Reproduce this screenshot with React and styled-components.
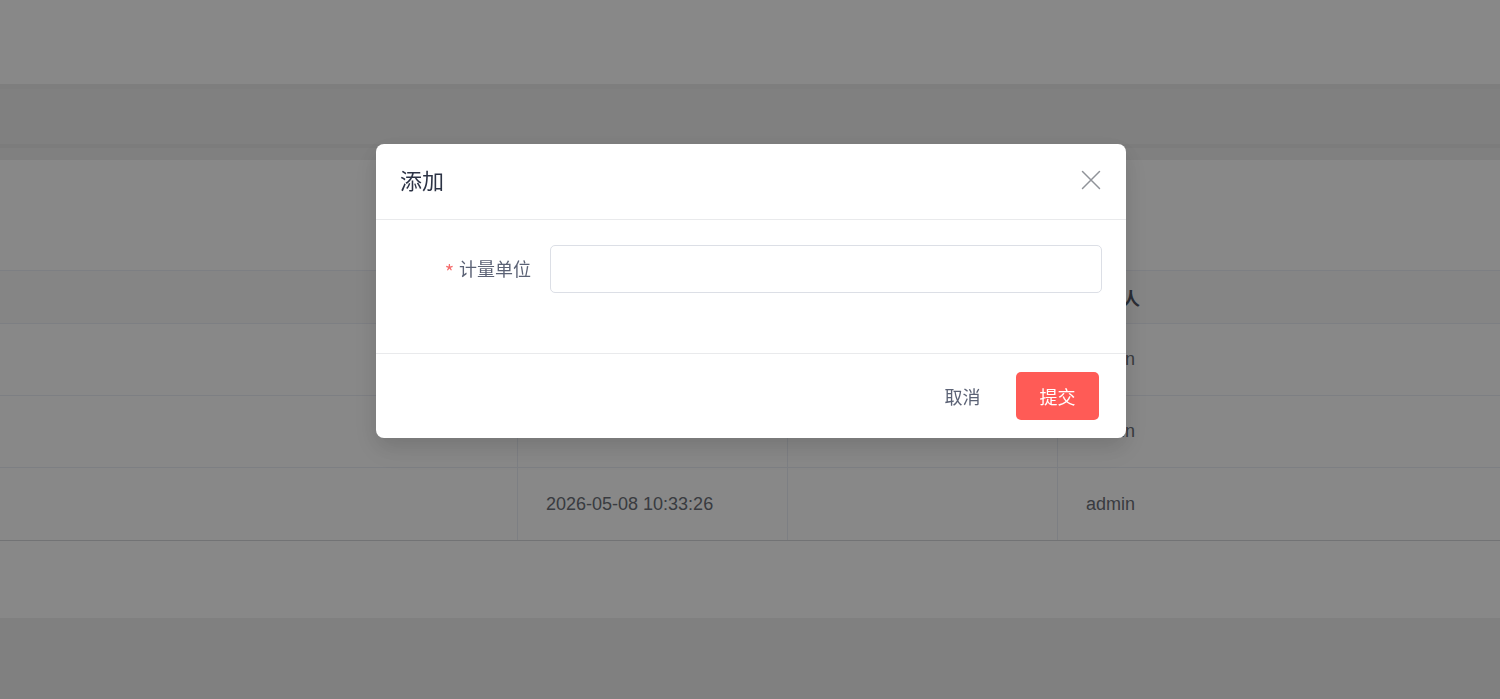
import React, { useState } from 'react'
import styled, { createGlobalStyle } from 'styled-components'

const GlobalStyle = createGlobalStyle`
  html, body {
    margin: 0;
    padding: 0;
    height: 100%;
    overflow: hidden;
    font-family: "Liberation Sans", "Noto Sans CJK SC", Arial, sans-serif;
    background: #f0f0f0;
  }
  * { box-sizing: border-box; }
`

const rows = [
  { time: '', remark: '', creator: 'admin' },
  { time: '', remark: '', creator: 'admin' },
  { time: '2026-05-08 10:33:26', remark: '', creator: 'admin' },
]

function App() {
  const [unit, setUnit] = useState('')
  return (
    <>
      <GlobalStyle />
      <Page>
        <TopBar />
        <TagsBar />
        <Main>
          <Card>
            <SearchArea />
            <Table>
              <HeadCell />
              <HeadCell $bordered />
              <HeadCell $bordered />
              <HeadCell $bordered>创建人</HeadCell>
              {rows.map((r, i) => (
                <React.Fragment key={i}>
                  <Cell />
                  <Cell $bordered>{r.time}</Cell>
                  <Cell $bordered>{r.remark}</Cell>
                  <Cell $bordered>{r.creator}</Cell>
                </React.Fragment>
              ))}
            </Table>
            <CardFoot />
          </Card>
        </Main>
      </Page>

      <Mask>
        <Dialog>
          <DialogHeader>
            <Title>添加</Title>
            <CloseBtn aria-label="close">
              <svg width="20" height="20" viewBox="0 0 20 20" fill="none">
                <path d="M1.5 1.5 L18.5 18.5 M18.5 1.5 L1.5 18.5" stroke="#909399" strokeWidth="1.5" strokeLinecap="round" />
              </svg>
            </CloseBtn>
          </DialogHeader>
          <DialogBody>
            <FormItem>
              <Label><Star>*</Star>计量单位</Label>
              <Input value={unit} onChange={e => setUnit(e.target.value)} />
            </FormItem>
          </DialogBody>
          <DialogFooter>
            <Button>取消</Button>
            <Button $primary>提交</Button>
          </DialogFooter>
        </Dialog>
      </Mask>
    </>
  )
}

const Page = styled.div`
  display: flex;
  flex-direction: column;
  min-height: 100vh;
  background: #f0f0f0;
`
const TopBar = styled.div`
  height: 84px;
  background: #ffffff;
`
const TagsBar = styled.div`
  height: 64px;
  background: #f0f0f0;
  border-top: 5px solid #ececec;
  border-bottom: 4px solid #e8e8e8;
`
const Main = styled.div`
  padding-top: 12px;
`
const Card = styled.div`
  background: #ffffff;
`
const SearchArea = styled.div`
  height: 110px;
`
const Table = styled.div`
  display: grid;
  grid-template-columns: 517px 270px 270px 1fr;
  grid-template-rows: 53px repeat(3, 72px);
  border-top: 1px solid #ebeef5;
  border-bottom: 1px solid #d6d8dc;
  color: #6b6f78;
  font-size: 18px;
`
const HeadCell = styled.div`
  display: flex;
  align-items: center;
  padding-left: 28px;
  background: #fafafa;
  font-weight: 600;
  color: #4f5563;
  border-bottom: 1px solid #ebeef5;
  border-left: ${p => (p.$bordered ? '1px solid #ebeef5' : 'none')};
`
const Cell = styled.div`
  display: flex;
  align-items: center;
  padding-left: 28px;
  border-bottom: 1px solid #ebeef5;
  border-left: ${p => (p.$bordered ? '1px solid #ebeef5' : 'none')};
  &:nth-last-child(-n + 4) { border-bottom: none; }
`
const CardFoot = styled.div`
  height: 77px;
`

const Mask = styled.div`
  position: fixed;
  inset: 0;
  background: rgba(0, 0, 0, 0.467);
  display: flex;
  justify-content: center;
  align-items: flex-start;
  padding: 144px 0 0 2px;
`
const Dialog = styled.div`
  width: 750px;
  background: #ffffff;
  border-radius: 8px;
  box-shadow: 0 12px 32px 4px rgba(0, 0, 0, 0.05), 0 8px 20px rgba(0, 0, 0, 0.1);
  font-family: "Noto Sans CJK SC", "Liberation Sans", sans-serif;
`
const DialogHeader = styled.div`
  height: 76px;
  padding: 0 24px 3px;
  display: flex;
  align-items: center;
  justify-content: space-between;
  border-bottom: 1px solid #e9eaec;
`
const Title = styled.span`
  font-size: 22px;
  color: #2c3345;
  line-height: 1;
  margin-bottom: 3px;
`
const CloseBtn = styled.button`
  border: none;
  background: none;
  padding: 0;
  margin-right: 1px;
  width: 20px;
  height: 20px;
  display: flex;
  cursor: pointer;
`
const DialogBody = styled.div`
  padding: 25px 24px 60px;
  border-bottom: 1px solid #e9eaec;
`
const FormItem = styled.div`
  display: flex;
  align-items: center;
`
const Label = styled.label`
  width: 150px;
  padding: 0 19px 3px 0;
  text-align: right;
  font-size: 18px;
  color: #5b6275;
`
const Star = styled.span`
  display: inline-block;
  color: #f56c6c;
  font-size: 20px;
  margin-right: 5px;
  transform: translateY(4px);
`
const Input = styled.input`
  flex: 1;
  height: 48px;
  border: 1px solid #dcdfe6;
  border-radius: 5px;
  padding: 0 15px;
  font-size: 18px;
  outline: none;
`
const DialogFooter = styled.div`
  padding: 18px 27px;
  display: flex;
  justify-content: flex-end;
  gap: 12px;
`
const Button = styled.button`
  width: 83px;
  height: 48px;
  border: none;
  border-radius: 5px;
  font-family: inherit;
  font-size: 18px;
  cursor: pointer;
  background: ${p => (p.$primary ? '#ff5b56' : 'transparent')};
  color: ${p => (p.$primary ? '#ffffff' : '#5b6275')};
`

export default App
